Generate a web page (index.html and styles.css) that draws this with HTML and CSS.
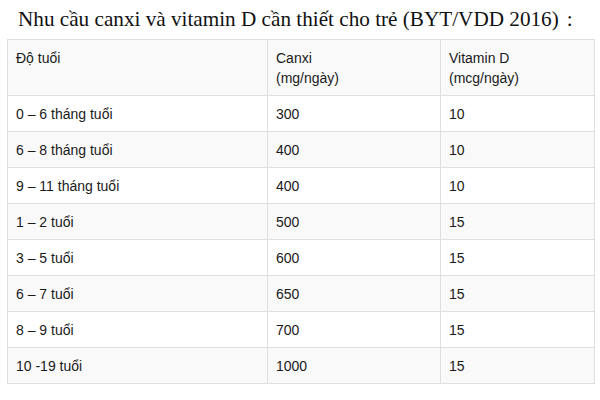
FILE: index.html
```html
<!DOCTYPE html>
<html lang="vi">
<head>
<meta charset="utf-8">
<link rel="stylesheet" href="styles.css">
</head>
<body>
<div class="page">
  <h1 class="title">Nhu cầu canxi và vitamin D cần thiết cho trẻ (BYT/VDD 2016)<span class="colon">:</span></h1>
  <table class="needs">
    <colgroup>
      <col class="c1"><col class="c2"><col class="c3">
    </colgroup>
    <tr><td>Độ tuổi</td><td>Canxi<br>(mg/ngày)</td><td>Vitamin D<br>(mcg/ngày)</td></tr>
    <tr><td>0 – 6 tháng tuổi</td><td>300</td><td>10</td></tr>
    <tr><td>6 – 8 tháng tuổi</td><td>400</td><td>10</td></tr>
    <tr><td>9 – 11 tháng tuổi</td><td>400</td><td>10</td></tr>
    <tr><td>1 – 2 tuổi</td><td>500</td><td>15</td></tr>
    <tr><td>3 – 5 tuổi</td><td>600</td><td>15</td></tr>
    <tr><td>6 – 7 tuổi</td><td>650</td><td>15</td></tr>
    <tr><td>8 – 9 tuổi</td><td>700</td><td>15</td></tr>
    <tr><td>10 -19 tuổi</td><td>1000</td><td>15</td></tr>
  </table>
</div>
</body>
</html>
```
FILE: styles.css
```css
html, body {
  margin: 0;
  padding: 0;
  background: #ffffff;
}
.page {
  padding: 6px 7px 0 7px;
}
.title {
  margin: 0 0 7px 0;
  padding-left: 11px;
  font-family: "Liberation Serif", "Times New Roman", serif;
  font-size: 21.2px;
  font-weight: normal;
  line-height: 26px;
  color: #111;
  white-space: nowrap;
}
.colon {
  padding-left: 8px;
}
.needs {
  border-collapse: collapse;
  width: 587px;
  table-layout: fixed;
  font-family: "Liberation Sans", Arial, sans-serif;
  font-size: 14px;
  line-height: 20px;
  color: #1a1a1a;
}
.c1 { width: 260px; }
.c2 { width: 173px; }
.c3 { width: 154px; }
.needs td {
  border: 1px solid #dedede;
  padding: 7.5px 8px;
  vertical-align: top;
  background: #ffffff;
}
.needs tr:nth-child(odd) td {
  background: #f9f9f9;
}
```
